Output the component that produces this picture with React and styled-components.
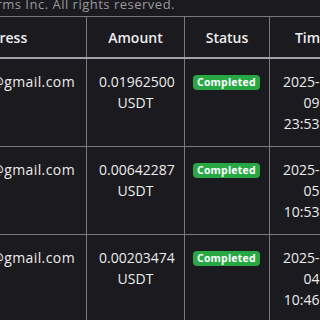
import React, { useLayoutEffect, useRef } from 'react'
import styled, { createGlobalStyle } from 'styled-components'

// where the first column's right border sits in the scrolled view
const ADDRESS_EDGE = 86

const columns = [
  { label: 'Address', width: 173 },
  { label: 'Amount', width: 98 },
  { label: 'Status', width: 85 },
  { label: 'Time', width: 84 },
]

const rows = [
  { email: 'rahul2291@gmail.com', amount: '0.01962500', time: '2025-12-09 23:53:27' },
  { email: 'rahul2291@gmail.com', amount: '0.00642287', time: '2025-12-05 10:53:51' },
  { email: 'rahul2291@gmail.com', amount: '0.00203474', time: '2025-12-04 10:46:42' },
]

export default function App () {
  const scroller = useRef(null)
  const firstHead = useRef(null)

  // the shot is a horizontally scrolled view of a wider history table
  useLayoutEffect(() => {
    const th = firstHead.current
    scroller.current.scrollLeft = th.offsetLeft + th.offsetWidth - ADDRESS_EDGE
  }, [])

  return (
    <>
      <Global />
      <Copyright>
        <span>© 2025 Coinpay Platforms Inc. All rights reserved.</span>
      </Copyright>
      <Scroller ref={scroller}>
        <Table>
          <colgroup>
            {columns.map((c) => <Col key={c.label} $w={c.width} />)}
          </colgroup>
          <thead>
            <tr>
              {columns.map((c, i) => (
                <Th key={c.label} ref={i === 0 ? firstHead : undefined}>{c.label}</Th>
              ))}
            </tr>
          </thead>
          <tbody>
            {rows.map((row) => (
              <tr key={row.amount}>
                <Td><Email><span>{row.email}</span></Email></Td>
                <Td>{row.amount} USDT</Td>
                <Td><Badge>Completed</Badge></Td>
                <Td>{row.time}</Td>
              </tr>
            ))}
          </tbody>
        </Table>
      </Scroller>
    </>
  )
}

const Global = createGlobalStyle`
  html, body {
    margin: 0;
    height: 100%;
    overflow: hidden;
    background: #1b1a1f;
    font-family: 'Open Sans', 'Liberation Sans', sans-serif;
  }
`

const Copyright = styled.div`
  display: flex;
  justify-content: flex-end;
  width: 175px;
  height: 16px;
  color: #9a999e;
  font-size: 13px;
  line-height: 9px;
  letter-spacing: 0.5px;
  white-space: nowrap;
`

const Scroller = styled.div`
  width: 320px;
  overflow: hidden;
`

const Table = styled.table`
  width: ${columns.reduce((sum, c) => sum + c.width, 0)}px;
  table-layout: fixed;
  border-collapse: collapse;
  color: #ececee;
`

const Col = styled.col`
  width: ${(p) => p.$w}px;
`

const Th = styled.th`
  padding: 10px 12px 9px;
  border: 1px solid #7a797f;
  border-bottom: 2px solid #a3a2a8;
  font-size: 14px;
  font-weight: 600;
  line-height: 21px;
  text-align: center;
  white-space: nowrap;
`

const Td = styled.td`
  padding: 12px;
  border: 1px solid #7a797f;
  font-size: 14px;
  line-height: 21px;
  text-align: center;
  vertical-align: top;
`

const Email = styled.div`
  display: flex;
  justify-content: flex-end;
  margin-right: -1px;
  letter-spacing: 0.4px;
  white-space: nowrap;
`

const Badge = styled.span`
  display: inline-block;
  margin-left: -4px;
  padding: 2px 4px;
  border-radius: 4px;
  background: #28a745;
  color: #fff;
  font-size: 10.5px;
  font-weight: 700;
  line-height: 11px;
  letter-spacing: 0.2px;
  vertical-align: 1px;
`
